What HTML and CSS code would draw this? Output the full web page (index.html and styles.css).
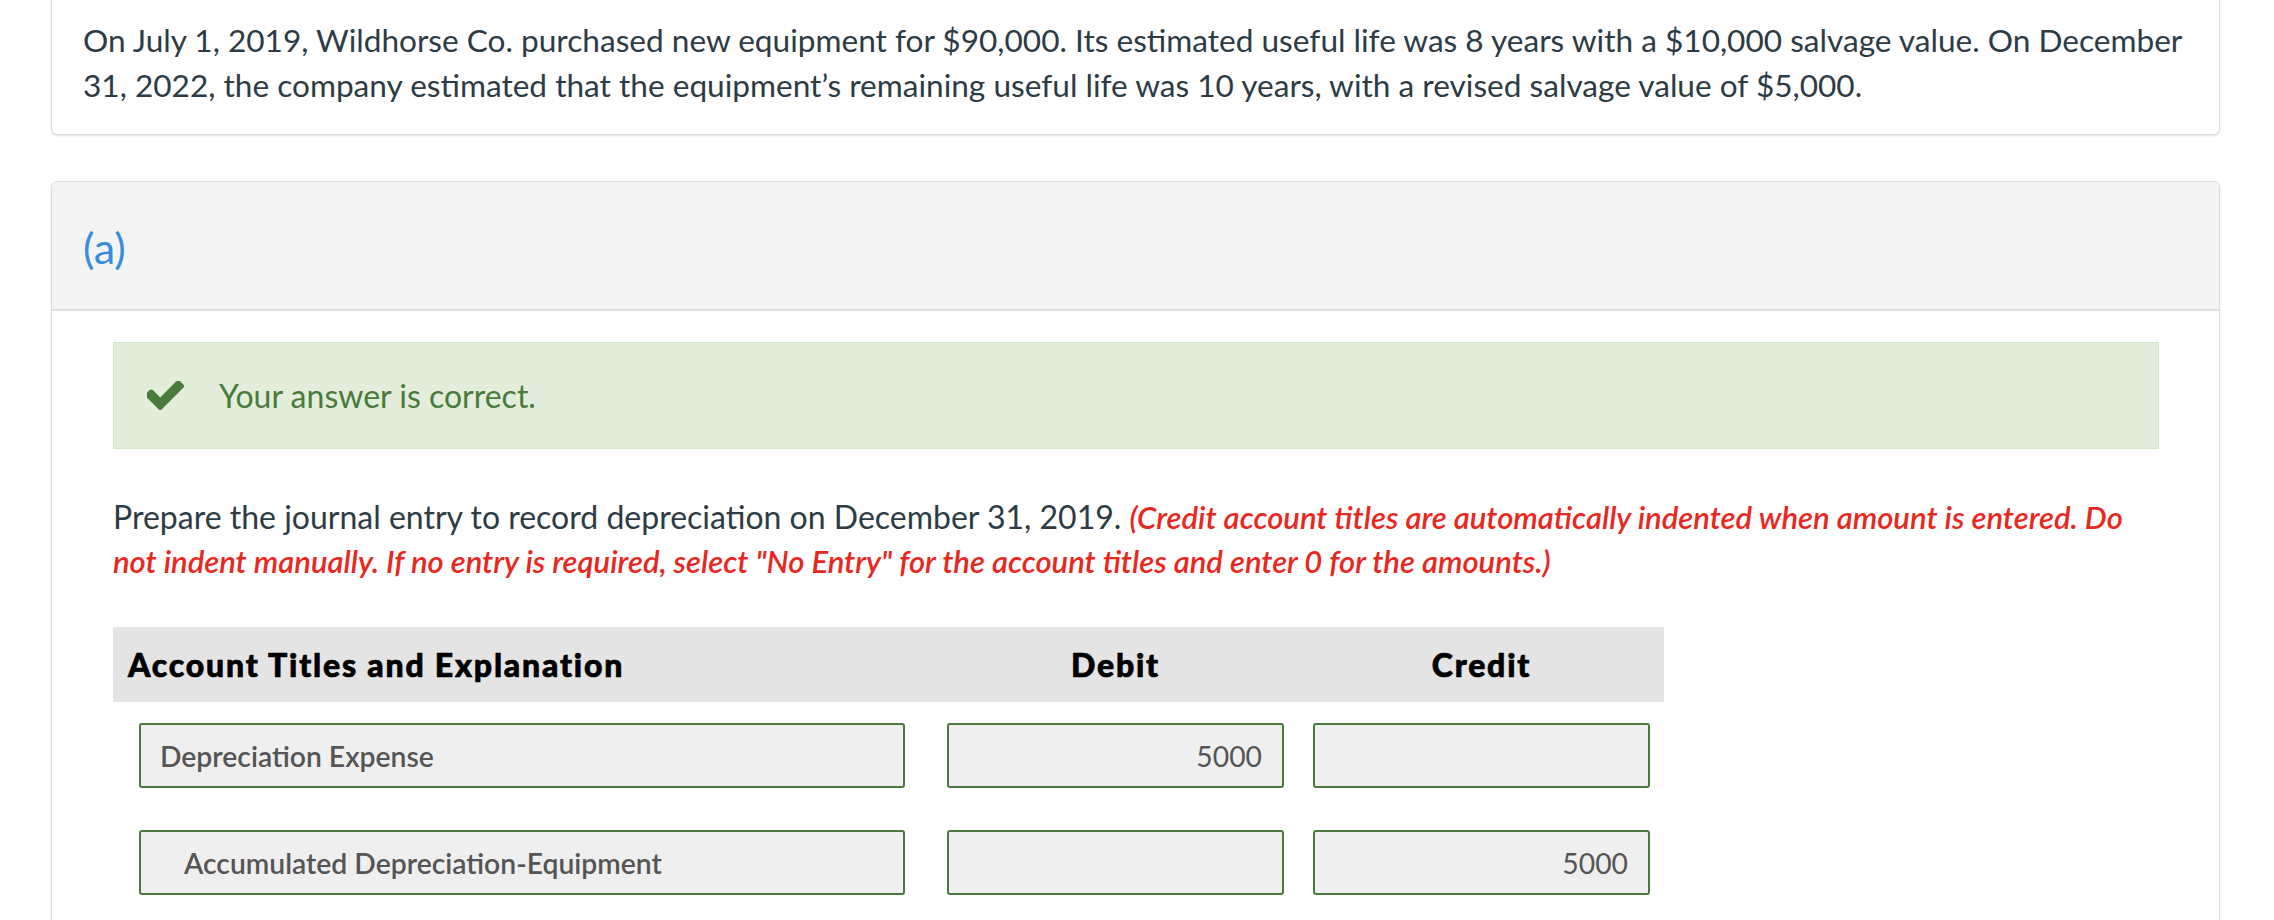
FILE: index.html
```html
<!DOCTYPE html>
<html lang="en">
<head>
<meta charset="utf-8">
<title>Depreciation question</title>
<link rel="stylesheet" href="styles.css">
</head>
<body>
<div class="page">
  <div class="card intro">
    <p class="intro-text">On July 1, 2019, Wildhorse Co. purchased new equipment for $90,000. Its estimated useful life was 8 years with a $10,000 salvage value. On December 31, 2022, the company estimated that the equipment’s remaining useful life was 10 years, with a revised salvage value of $5,000.</p>
  </div>

  <div class="card part">
    <div class="part-header">
      <span class="part-label">(a)</span>
    </div>
    <div class="part-body">
      <div class="alert-success">
        <svg class="check" viewBox="183 362 1488 1160" aria-hidden="true"><path d="M1671 566q0 40-28 68l-724 724-136 136q-28 28-68 28t-68-28l-136-136-362-362q-28-28-28-68t28-68l136-136q28-28 68-28t68 28l294 295 656-657q28-28 68-28t68 28l136 136q28 28 28 68z"/></svg>
        <span class="alert-text">Your answer is correct.</span>
      </div>

      <p class="instructions">Prepare the journal entry to record depreciation on December 31, 2019. <em class="note">(Credit account titles are automatically indented when amount is entered. Do not indent manually. If no entry is required, select "No Entry" for the account titles and enter 0 for the amounts.)</em></p>

      <div class="journal">
        <div class="journal-head">
          <div class="head-account">Account Titles and Explanation</div>
          <div class="head-amount head-debit">Debit</div>
          <div class="head-amount head-credit">Credit</div>
        </div>
        <div class="journal-row">
          <div class="field field-account">Depreciation Expense</div>
          <div class="field field-amount field-debit">5000</div>
          <div class="field field-amount field-credit"></div>
        </div>
        <div class="journal-row">
          <div class="field field-account indented">Accumulated Depreciation-Equipment</div>
          <div class="field field-amount field-debit"></div>
          <div class="field field-amount field-credit">5000</div>
        </div>
      </div>
    </div>
  </div>
</div>
</body>
</html>
```

FILE: styles.css
```css
html, body {
  margin: 0;
  padding: 0;
  background: #ffffff;
}

body {
  font-family: Lato, "Open Sans", "Liberation Sans", sans-serif;
  color: #2d3b45;
  overflow: hidden;
}

.page {
  padding: 0 54px 0 51px;
}

.card {
  border: 1px solid #dcdcdc;
  border-radius: 6px;
  background: #ffffff;
  box-shadow: 0 1px 2px rgba(0, 0, 0, 0.12);
}

.intro {
  margin-top: -14px;
  padding: 31px 30px 26px 31px;
}

.intro-text {
  margin: 0;
  font-size: 31.6px;
  line-height: 45px;
}

.part {
  margin-top: 46px;
  height: 900px;
}

.part-header {
  background: #f4f4f4;
  border-bottom: 2px solid #dddddd;
  border-radius: 6px 6px 0 0;
  padding: 41px 31px 36px 31px;
}

.part-label {
  display: block;
  color: #3a8ddd;
  font-size: 43px;
  line-height: 50px;
}

.part-body {
  padding: 31px 60px 0 61px;
}

.alert-success {
  display: flex;
  align-items: center;
  height: 105px;
  background: #e2eedb;
  border: 1px solid #d3e6c5;
  padding-left: 33px;
}

.check {
  width: 37px;
  height: 29px;
  fill: #4a7a3c;
  flex: none;
}

.alert-text {
  margin-left: 35px;
  font-size: 32px;
  color: #4a7a3c;
}

.instructions {
  margin: 46px 0 0 0;
  font-size: 32px;
  line-height: 43px;
}

.note {
  color: #e8281e;
  font-style: italic;
  font-weight: 600;
  font-size: 31px;
}

.journal {
  margin-top: 44px;
  width: 1551px;
}

.journal-head {
  display: flex;
  align-items: center;
  height: 75px;
  background: #e4e4e4;
  color: #000000;
  font-weight: 900;
  font-size: 32px;
  letter-spacing: 1.8px;
  -webkit-text-stroke: 0.7px #000000;
}

.head-account {
  width: 792px;
  padding-left: 15px;
  box-sizing: border-box;
}

.head-amount {
  width: 337px;
  text-align: center;
}

.head-debit {
  margin-left: 42px;
}

.head-credit {
  margin-left: 29px;
}

.journal-row {
  display: flex;
  padding: 21px 0 21px 26px;
}

.field {
  box-sizing: border-box;
  height: 65px;
  border: 2px solid #4b7a3f;
  border-radius: 3px;
  background: #efefef;
  color: #555555;
  font-size: 28.3px;
  display: flex;
  align-items: center;
}

.field-account {
  width: 766px;
  padding-left: 19px;
  font-weight: 600;
}

.field-account.indented {
  padding-left: 43px;
}

.field-amount {
  width: 337px;
  justify-content: flex-end;
  padding-right: 20px;
}

.field-debit {
  margin-left: 42px;
}

.field-credit {
  margin-left: 29px;
}
```
